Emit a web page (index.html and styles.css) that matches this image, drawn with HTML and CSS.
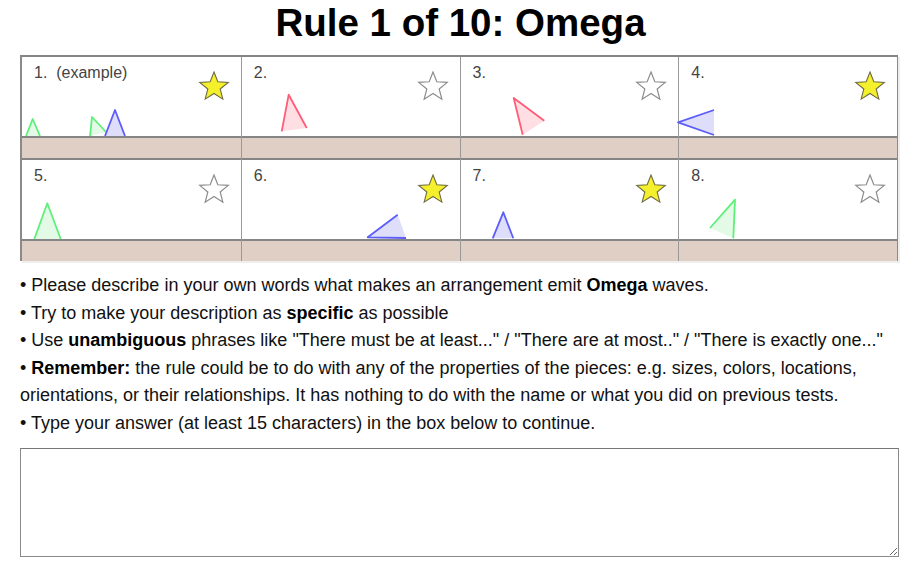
FILE: index.html
```html
<!DOCTYPE html>
<html>
<head>
<meta charset="utf-8">
<link rel="stylesheet" href="styles.css">
</head>
<body>
<h1 class="title">Rule 1 of 10: Omega</h1>
<div class="board">
  <div class="cell">
    <div class="canvas">
      <svg class="pieces" viewBox="0 0 218 79" width="218" height="79">
        <polygon class="green" points="4,79 10.7,62 18,79"/>
        <polyline class="green-s" points="4,79 10.7,62 18,79"/>
        <polygon class="green" points="68,79 70,60 84,75"/>
        <polyline class="green-s" points="68,79 70,60 84,75"/>
        <polygon class="blue" points="83,79 93,53 103,79"/>
        <polyline class="blue-s" points="83,79 93,53 103,79"/>
      </svg>
      <div class="head"><span class="label">1.&nbsp;&nbsp;(example)</span><svg class="star on" viewBox="0 0 32 30" width="32" height="30"><polygon points="16,1 19.82,10.74 30.27,11.36 22.18,18.01 24.82,28.14 16,22.5 7.18,28.14 9.82,18.01 1.73,11.36 12.18,10.74"/></svg></div>
    </div>
    <div class="strip"></div>
  </div>
  <div class="cell">
    <div class="canvas">
      <svg class="pieces" viewBox="0 0 218 79" width="218" height="79">
        <polygon class="red" points="39.7,74.3 46.7,37.7 64.7,71"/>
        <polyline class="red-s" points="39.7,74.3 46.7,37.7 64.7,71"/>
      </svg>
      <div class="head"><span class="label">2.</span><svg class="star off" viewBox="0 0 32 30" width="32" height="30"><polygon points="16,1 19.82,10.74 30.27,11.36 22.18,18.01 24.82,28.14 16,22.5 7.18,28.14 9.82,18.01 1.73,11.36 12.18,10.74"/></svg></div>
    </div>
    <div class="strip"></div>
  </div>
  <div class="cell">
    <div class="canvas">
      <svg class="pieces" viewBox="0 0 218 79" width="218" height="79">
        <polygon class="red" points="83.3,63.7 52.7,41 61.7,77.7"/>
        <polyline class="red-s" points="83.3,63.7 52.7,41 61.7,77.7"/>
      </svg>
      <div class="head"><span class="label">3.</span><svg class="star off" viewBox="0 0 32 30" width="32" height="30"><polygon points="16,1 19.82,10.74 30.27,11.36 22.18,18.01 24.82,28.14 16,22.5 7.18,28.14 9.82,18.01 1.73,11.36 12.18,10.74"/></svg></div>
    </div>
    <div class="strip"></div>
  </div>
  <div class="cell">
    <div class="canvas">
      <svg class="pieces" viewBox="0 0 218 79" width="218" height="79">
        <polygon class="blue" points="35,53 -1,65.3 35,78"/>
        <polyline class="blue-s" points="35,53 -1,65.3 35,78"/>
      </svg>
      <div class="head"><span class="label">4.</span><svg class="star on" viewBox="0 0 32 30" width="32" height="30"><polygon points="16,1 19.82,10.74 30.27,11.36 22.18,18.01 24.82,28.14 16,22.5 7.18,28.14 9.82,18.01 1.73,11.36 12.18,10.74"/></svg></div>
    </div>
    <div class="strip"></div>
  </div>
  <div class="cell">
    <div class="canvas">
      <svg class="pieces" viewBox="0 0 218 79" width="218" height="79">
        <polygon class="green" points="12.3,79 25.3,43.3 38.7,79"/>
        <polyline class="green-s" points="12.3,79 25.3,43.3 38.7,79"/>
      </svg>
      <div class="head"><span class="label">5.</span><svg class="star off" viewBox="0 0 32 30" width="32" height="30"><polygon points="16,1 19.82,10.74 30.27,11.36 22.18,18.01 24.82,28.14 16,22.5 7.18,28.14 9.82,18.01 1.73,11.36 12.18,10.74"/></svg></div>
    </div>
    <div class="strip last"></div>
  </div>
  <div class="cell">
    <div class="canvas">
      <svg class="pieces" viewBox="0 0 218 79" width="218" height="79">
        <polygon class="blue" points="155.7,54.7 125.7,77.3 164,78"/>
        <polyline class="blue-s" points="155.7,54.7 125.7,77.3 164,78"/>
      </svg>
      <div class="head"><span class="label">6.</span><svg class="star on" viewBox="0 0 32 30" width="32" height="30"><polygon points="16,1 19.82,10.74 30.27,11.36 22.18,18.01 24.82,28.14 16,22.5 7.18,28.14 9.82,18.01 1.73,11.36 12.18,10.74"/></svg></div>
    </div>
    <div class="strip last"></div>
  </div>
  <div class="cell">
    <div class="canvas">
      <svg class="pieces" viewBox="0 0 218 79" width="218" height="79">
        <polygon class="blue" points="31.7,78.3 42.3,52.3 52.3,78.3"/>
        <polyline class="blue-s" points="31.7,78.3 42.3,52.3 52.3,78.3"/>
      </svg>
      <div class="head"><span class="label">7.</span><svg class="star on" viewBox="0 0 32 30" width="32" height="30"><polygon points="16,1 19.82,10.74 30.27,11.36 22.18,18.01 24.82,28.14 16,22.5 7.18,28.14 9.82,18.01 1.73,11.36 12.18,10.74"/></svg></div>
    </div>
    <div class="strip last"></div>
  </div>
  <div class="cell">
    <div class="canvas">
      <svg class="pieces" viewBox="0 0 218 79" width="218" height="79">
        <polygon class="green" points="31,68 56,39.7 54.3,78.3"/>
        <polyline class="green-s" points="31,68 56,39.7 54.3,78.3"/>
      </svg>
      <div class="head"><span class="label">8.</span><svg class="star off" viewBox="0 0 32 30" width="32" height="30"><polygon points="16,1 19.82,10.74 30.27,11.36 22.18,18.01 24.82,28.14 16,22.5 7.18,28.14 9.82,18.01 1.73,11.36 12.18,10.74"/></svg></div>
    </div>
    <div class="strip last"></div>
  </div>
</div>
<div class="notes">
  <div>• Please describe in your own words what makes an arrangement emit <b>Omega</b> waves.</div>
  <div>• Try to make your description as <b>specific</b> as possible</div>
  <div>• Use <b>unambiguous</b> phrases like "There must be at least..." / "There are at most.." / "There is exactly one..."</div>
  <div>• <b>Remember:</b> the rule could be to do with any of the properties of the pieces: e.g. sizes, colors, locations,<br>orientations, or their relationships. It has nothing to do with the name or what you did on previous tests.</div>
  <div>• Type your answer (at least 15 characters) in the box below to continue.</div>
</div>
<textarea class="answer"></textarea>
</body>
</html>
```
FILE: styles.css
```css
html, body {
  background: #ffffff;
}
body {
  margin: 0 20px;
  font-family: "Liberation Sans", Arial, sans-serif;
  color: #000;
}
.title {
  margin: 0;
  padding-top: 1px;
  height: 55px;
  box-sizing: border-box;
  text-align: center;
  font-size: 38.5px;
  line-height: 44px;
  font-weight: bold;
  color: #000;
}
.board {
  width: 878px;
  box-sizing: border-box;
  display: grid;
  grid-template-columns: repeat(4, 1fr);
  border-top: 2px solid #858585;
  border-left: 2px solid #8a8a8a;
  border-right: 1px solid #8a8a8a;
  box-shadow: 2px 2px 0 #eeeeee;
}
.cell {
  border-left: 1px solid #999;
}
.cell:nth-child(4n+1) {
  border-left: none;
}
.canvas {
  position: relative;
  height: 79px;
  background: #fff;
}
.pieces {
  position: absolute;
  left: 0;
  top: 0;
  overflow: visible;
}
.head {
  position: relative;
  display: flex;
  justify-content: space-between;
  align-items: flex-start;
  padding: 7px 11px 0 12px;
}
.label {
  font-size: 16px;
  line-height: 18px;
  color: #444;
}
.star {
  margin-top: 7px;
  display: block;
}
.star.on polygon {
  fill: #f5f02c;
  stroke: #6f6c45;
  stroke-width: 1.1;
}
.star.off polygon {
  fill: #ffffff;
  stroke: #8c8c8c;
  stroke-width: 1.2;
}
.strip {
  height: 20px;
  background: #dfcfc4;
  border-top: 2px solid #858585;
  border-bottom: 2px solid #858585;
}
.strip.last {
  border-bottom: none;
}
.green { fill: #e3fbe6; stroke: none; }
.green-s { fill: none; stroke: #5ef07a; stroke-width: 1.8; stroke-linejoin: round; }
.red { fill: #ffdfe3; stroke: none; }
.red-s { fill: none; stroke: #ff5c78; stroke-width: 1.8; stroke-linejoin: round; }
.blue { fill: #dedefa; stroke: none; }
.blue-s { fill: none; stroke: #5d5dfa; stroke-width: 1.8; stroke-linejoin: round; }
.notes {
  margin-top: 11px;
  font-size: 18px;
  line-height: 27.5px;
  color: #111;
}
.notes b {
  color: #000;
}
.answer {
  display: block;
  margin-top: 11px;
  width: 879px;
  height: 109px;
  box-sizing: border-box;
  border: 1px solid #8a8a8a;
  border-top-color: #777;
  padding: 2px;
  resize: both;
  font-family: "Liberation Mono", monospace;
}
```
